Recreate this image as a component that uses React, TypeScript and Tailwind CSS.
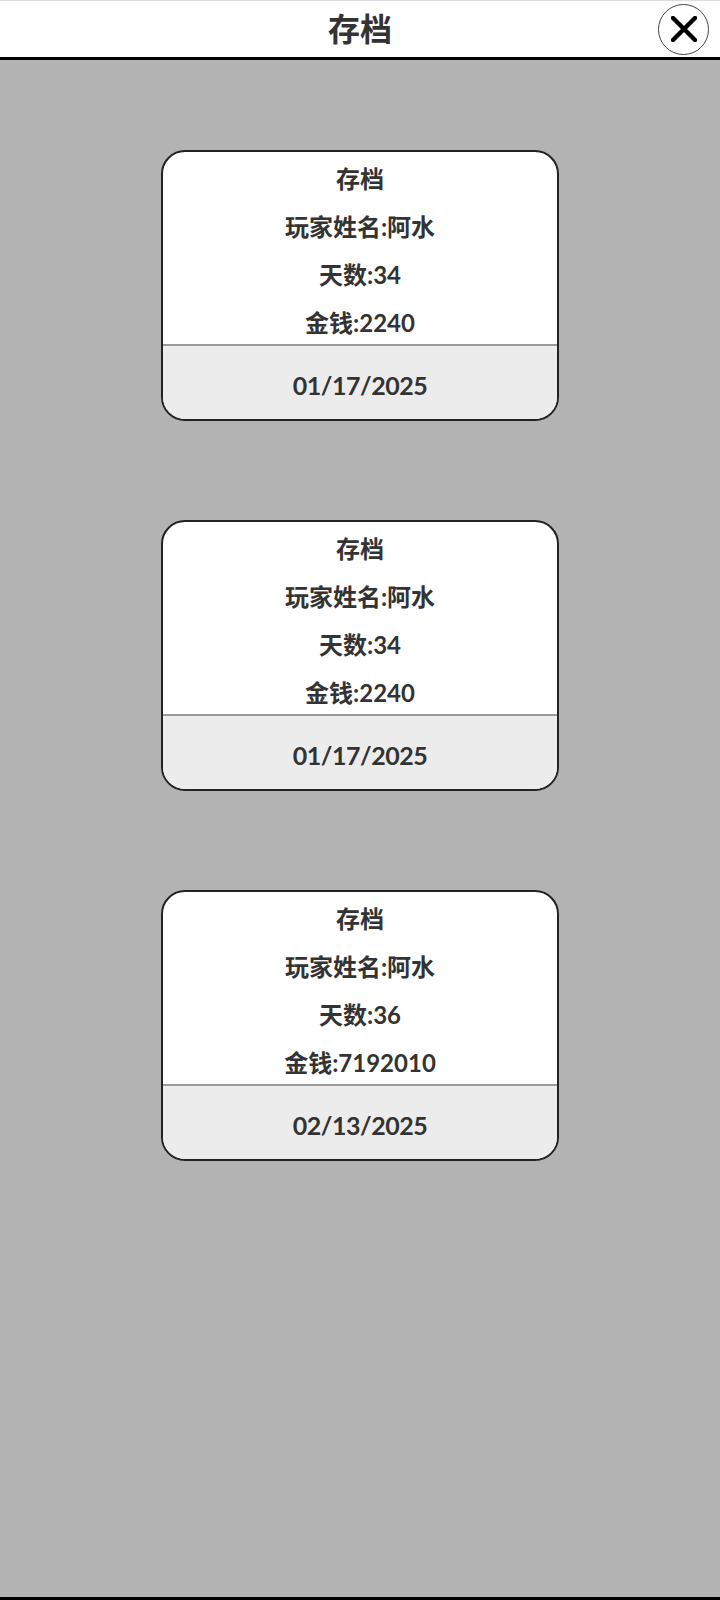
const saves = [
    { id: 1, name: "阿水", days: 34, money: 2240, date: "01/17/2025" },
    { id: 2, name: "阿水", days: 34, money: 2240, date: "01/17/2025" },
    { id: 3, name: "阿水", days: 36, money: 7192010, date: "02/13/2025" },
]

const font = { fontFamily: '"Lato", "Noto Sans CJK SC", sans-serif' }

const SaveCard = ({ name, days, money, date }: { name: string; days: number; money: number; date: string }) => {
    return (
        <div className="w-[398px] rounded-[24px] border-2 border-[#222] bg-white overflow-hidden">
            <div className="h-[192px] pt-[3px] flex flex-col items-center text-[24px] leading-[48px] font-bold text-[#333]">
                <p>存档</p>
                <p>玩家姓名:{name}</p>
                <p>天数:{days}</p>
                <p>金钱:{money}</p>
            </div>
            <div className="h-[75px] border-t-2 border-[#9a9a9a] bg-[#ececec] flex items-center justify-center pt-[6px]">
                <p className="text-[25px] font-bold text-[#333] tracking-[-0.5px]">{date}</p>
            </div>
        </div>
    )
}

export default function App() {
    return (
        <div className="h-[1600px] flex flex-col bg-[#b3b3b3]" style={font}>
            <header className="h-[60px] shrink-0 grid grid-cols-[1fr_auto_1fr] items-center bg-white border-t border-[#ddd] border-b-[3px] border-b-black">
                <div />
                <h1 className="text-[32px] font-bold text-[#333] leading-none">存档</h1>
                <div className="flex justify-end pr-[11px]">
                    <button className="w-[51px] h-[51px] rounded-full border border-[#444] bg-white flex items-center justify-center">
                        <svg width="26" height="26" viewBox="0 0 26 26">
                            <path d="M2 2 L24 24 M24 2 L2 24" stroke="#000" strokeWidth="4.5" strokeLinecap="round" />
                        </svg>
                    </button>
                </div>
            </header>
            <main className="flex-1 flex flex-col items-center gap-[99px] pt-[90px] border-b-[3px] border-black">
                {saves.map((item) => (
                    <SaveCard key={item.id} name={item.name} days={item.days} money={item.money} date={item.date} />
                ))}
            </main>
        </div>
    )
}
